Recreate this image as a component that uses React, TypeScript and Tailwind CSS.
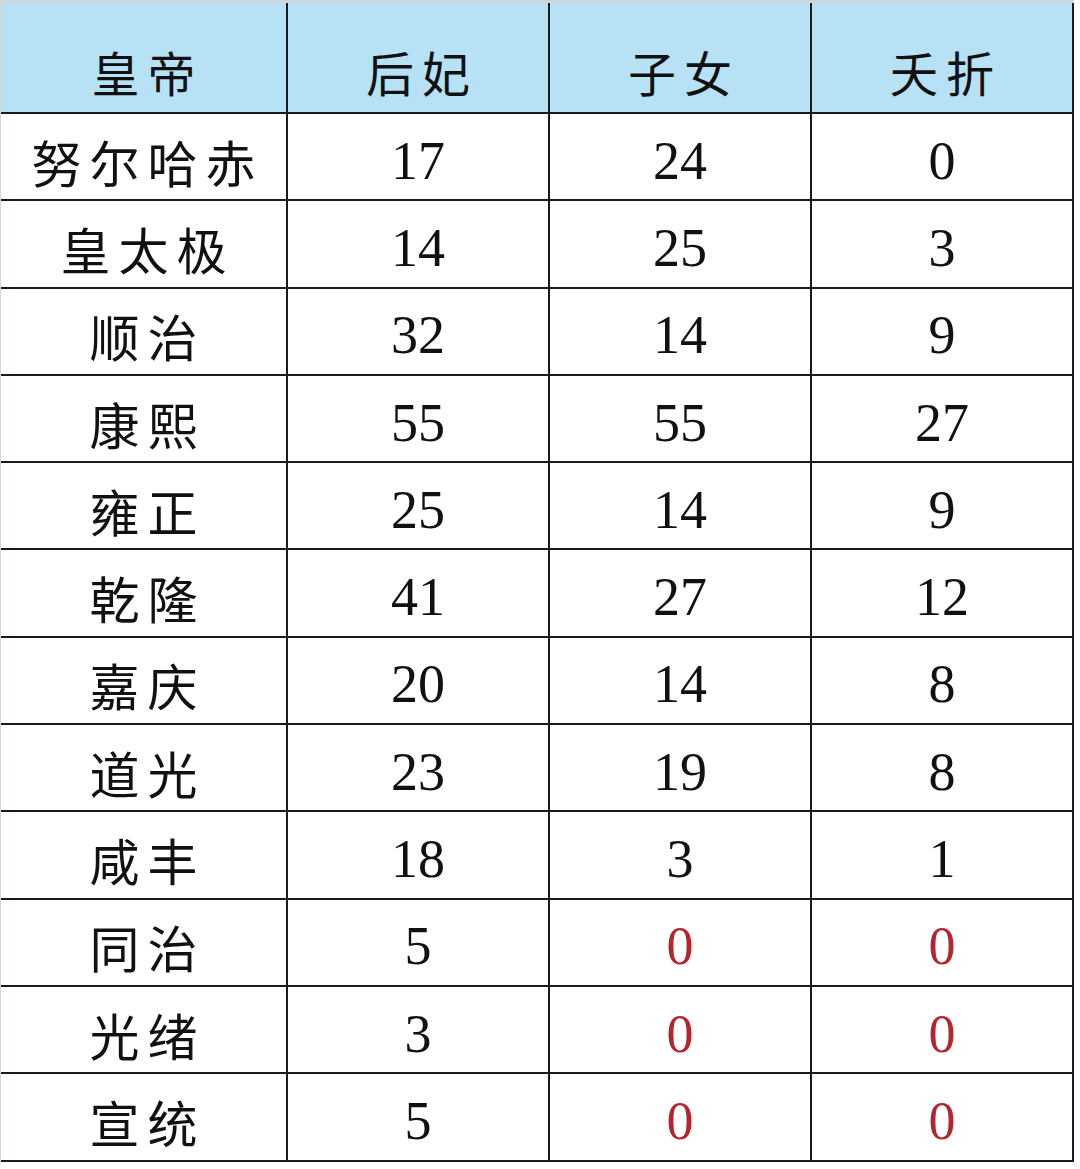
const rows: [string, string, string, string][] = [
  ['努尔哈赤', '17', '24', '0'],
  ['皇太极', '14', '25', '3'],
  ['顺治', '32', '14', '9'],
  ['康熙', '55', '55', '27'],
  ['雍正', '25', '14', '9'],
  ['乾隆', '41', '27', '12'],
  ['嘉庆', '20', '14', '8'],
  ['道光', '23', '19', '8'],
  ['咸丰', '18', '3', '1'],
  ['同治', '5', '0', '0'],
  ['光绪', '3', '0', '0'],
  ['宣统', '5', '0', '0'],
];

const headers = ['皇帝', '后妃', '子女', '夭折'];

const cjk = "font-['Noto_Sans_CJK_SC',sans-serif]";
const num = "font-['Liberation_Serif',serif]";

// 清朝最后三位皇帝的子女、夭折数为 0，原图用红色标出
function isRedZero(rowIdx: number, col: number) {
  return rowIdx >= 9 && col >= 2;
}

const cell = 'flex items-center justify-center overflow-hidden border-b-2 border-r-2 border-[#1a1a1a]';

export default function App() {
  return (
    <div className="w-[1080px] h-[1169px] bg-white overflow-hidden">
      <div className="w-[1074px] border-l border-t-[3px] border-l-gray-300 border-t-gray-300">
        <div className="grid grid-cols-[287px_262px_262px_262px] grid-rows-[111px] h-[111px] bg-[#b7e1f5]">
          {headers.map((h) => (
            <div key={h} className={cell}>
              <span className={`${cjk} text-[48px] leading-none font-normal tracking-[8px] pl-[8px] pt-[26px] text-[#111]`}>
                {h}
              </span>
            </div>
          ))}
        </div>
        {rows.map((r, ri) => (
          <div key={r[0]} className="grid grid-cols-[287px_262px_262px_262px] grid-rows-[87.3px] h-[87.3px]">
            <div className={cell}>
              <span className={`${cjk} text-[50px] leading-none font-normal tracking-[8px] pl-[8px] pt-[8px] text-[#111]`}>
                {r[0]}
              </span>
            </div>
            {r.slice(1).map((v, ci) => (
              <div key={ci} className={cell}>
                <span
                  className={`${num} text-[54px] leading-none pt-[8px] ${isRedZero(ri, ci + 1) ? 'text-[#b3262d]' : 'text-[#111]'}`}
                >
                  {v}
                </span>
              </div>
            ))}
          </div>
        ))}
      </div>
    </div>
  );
}
